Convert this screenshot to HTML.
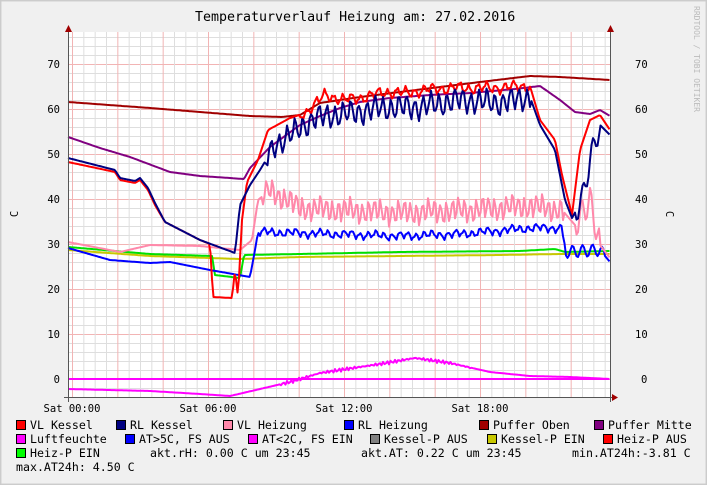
<!DOCTYPE html>
<html><head><meta charset="utf-8"><style>
html,body{margin:0;padding:0;background:#f0f0f0}
svg{display:block}
text{font-family:"DejaVu Sans Mono","Liberation Mono",monospace;fill:#000}
</style></head><body>
<svg id="s" width="707" height="485" viewBox="0 0 707 485" xmlns="http://www.w3.org/2000/svg">
<rect x="0" y="0" width="707" height="485" fill="#f0f0f0"/>
<rect x="0.5" y="0.5" width="706" height="484" fill="none" stroke="#c8c8c8" stroke-width="2"/>
<rect x="1" y="1" width="705" height="483" fill="none" stroke="#cfcfcf"/>
<rect x="68" y="32" width="543" height="365" fill="#ffffff"/>
<g id="grid"></g>
<g id="lines" fill="none" stroke-width="2" stroke-linejoin="round"></g>
<line x1="68.5" y1="28" x2="68.5" y2="402" stroke="#555"/>
<line x1="610.5" y1="28" x2="610.5" y2="402" stroke="#555"/>
<line x1="64" y1="397.5" x2="614" y2="397.5" stroke="#555"/>
<polygon points="65,32 72,32 68.5,25" fill="#a00000"/>
<polygon points="607,32 614,32 610.5,25" fill="#a00000"/>
<polygon points="612,394 612,401 618,397.5" fill="#a00000"/>
<text x="195" y="21" font-size="13.3">Temperaturverlauf Heizung am: 27.02.2016</text>
<g font-size="10.5" text-anchor="end">
<text x="60" y="68">70</text><text x="60" y="113">60</text><text x="60" y="158">50</text><text x="60" y="203">40</text><text x="60" y="248">30</text><text x="60" y="293">20</text><text x="60" y="338">10</text><text x="60" y="383">0</text>
</g>
<g font-size="10.5">
<text x="635" y="68">70</text><text x="635" y="113">60</text><text x="635" y="158">50</text><text x="635" y="203">40</text><text x="635" y="248">30</text><text x="635" y="293">20</text><text x="635" y="338">10</text><text x="641" y="383">0</text>
</g>
<text transform="translate(18,214) rotate(-90)" font-size="10.5" text-anchor="middle">C</text>
<text transform="translate(666,214) rotate(90)" font-size="10.5" text-anchor="middle">C</text>
<text transform="translate(694,6) rotate(90)" font-size="8" fill="#bbb" style="fill:#bbb">RRDTOOL / TOBI OETIKER</text>
<g font-size="10.5" text-anchor="middle">
<text x="72" y="412">Sat 00:00</text><text x="208" y="412">Sat 06:00</text><text x="344" y="412">Sat 12:00</text><text x="480" y="412">Sat 18:00</text>
</g>
<g id="leg" font-size="11.6"></g>
</svg>
<script>
var NS="http://www.w3.org/2000/svg";
function el(p,t,a){var e=document.createElementNS(NS,t);for(var k in a)e.setAttribute(k,a[k]);p.appendChild(e);return e;}
var g=document.getElementById('grid');
for(var v=-4;v<=76;v+=2){var y=379-4.5*v;if(y<32||y>397)continue;
 el(g,'line',{x1:68,x2:611,y1:y+.5,y2:y+.5,stroke:(v%10==0)?'#f2b4b4':'#dedede','stroke-width':1});}
for(var h=-0.5;h<=24;h+=0.5){var x=72+22.667*h;if(x<68||x>611)continue;
 el(g,'line',{y1:32,y2:397,x1:x+.5,x2:x+.5,stroke:(Math.abs(h%2)<0.01)?'#f2b4b4':'#dedede','stroke-width':1});}
var L=document.getElementById('lines');
function interp(pts,x){for(var i=0;i<pts.length-1;i++){if(x>=pts[i][0]&&x<=pts[i+1][0]){var t=(x-pts[i][0])/(pts[i+1][0]-pts[i][0]||1);return pts[i][1]+t*(pts[i+1][1]-pts[i][1]);}}return pts[pts.length-1][1];}
function draw(c,pts,osc,w){var d='';var x0=pts[0][0],x1=pts[pts.length-1][0];
 for(var x=x0;x<=x1;x+=1.5){var y=interp(pts,x);
  if(osc)for(var j=0;j<osc.length;j++){var o=osc[j];if(x>=o[0]&&x<=o[1])y+=o[2]*Math.sin((x-o[0])*2*Math.PI/o[3])+(o[4]||0)*Math.sin(x*1.7)+(o[5]||0)*Math.sin(x*0.23);}
  d+=(d?'L':'M')+x.toFixed(1)+' '+y.toFixed(1);}
 el(L,'path',{d:d,stroke:c,'stroke-width':w||2});}
draw('#c8c800',[[68,250],[150,256],[240,259],[300,257],[400,256],[500,255],[560,254],[610,254]]);
draw('#00e000',[[68,247],[150,254],[212,256],[215,275],[240,278],[244,255],[300,254],[400,252],[520,251],[555,249],[565,252],[610,251]]);
draw('#0000ff',[[68,248],[110,260],[150,263],[170,262],[210,270],[250,277],[255,250],[258,232],[300,233],[400,236],[460,234],[530,228],[562,228],[566,252],[600,250],[610,262]],[[258,565,3,8,1.2,1.5],[565,605,6,10]]);
draw('#ff88aa',[[68,242],[120,252],[150,245],[200,246],[240,250],[252,240],[258,200],[270,190],[300,208],[400,213],[470,210],[530,206],[562,210],[575,225],[590,200],[600,245],[610,258]],[[262,565,10,6,2.5,3],[575,600,14,9]]);
draw('#a00000',[[68,102],[150,108],[250,116],[282,117],[300,115],[320,103],[360,97],[400,92],[440,87],[480,82],[530,76],[560,77],[610,80]]);
draw('#800080',[[68,137],[100,148],[130,157],[170,172],[200,176],[244,179],[250,168],[270,147],[300,125],[320,116],[340,108],[360,102],[390,98],[430,95],[470,93],[515,89],[540,86],[560,100],[575,112],[590,114],[600,110],[610,116]]);
draw('#ff0000',[[68,162],[115,172],[120,180],[135,183],[140,180],[148,190],[155,205],[165,222],[200,240],[210,244],[213,297],[232,298],[235,270],[238,297],[242,220],[247,182],[258,160],[268,130],[290,118],[305,113],[325,95],[345,100],[365,97],[385,92],[405,93],[425,90],[450,88],[490,88],[530,86],[540,120],[555,140],[562,175],[572,215],[580,150],[590,120],[600,115],[610,130]],[[300,530,4,9,1.5,2]]);
draw('#000080',[[68,158],[115,170],[120,178],[135,181],[140,178],[148,188],[155,203],[165,222],[200,240],[235,253],[240,205],[250,185],[260,170],[275,145],[295,132],[315,118],[335,115],[360,112],[380,108],[420,107],[460,100],[500,103],[530,97],[540,125],[555,150],[565,200],[572,218],[582,200],[590,160],[600,125],[610,135]],[[265,530,10,8,2,3],[575,600,12,10]]);
draw('#ff00ff',[[68,379],[610,379]]);
draw('#ff00ff',[[68,389],[150,391],[200,394],[230,396],[260,389],[290,382],[320,373],[380,364],[415,358],[450,363],[490,372],[530,376],[570,377],[610,379]],[[280,470,1,4,0.8]]);
var lg=document.getElementById('leg');
function item(bx,y,c,t){el(lg,'rect',{x:bx+.5,y:y-8.5,width:9,height:9,fill:c,stroke:'#000','stroke-width':1});var e=el(lg,'text',{x:bx+14,y:y});e.textContent=t;}
function txt(x,y,t){var e=el(lg,'text',{x:x,y:y});e.textContent=t;}
var r1=429,r2=443,r3=457,r4=471;
item(16,r1,'#ff0000','VL Kessel');item(116,r1,'#000080','RL Kessel');item(223,r1,'#ff88aa','VL Heizung');item(344,r1,'#0000ff','RL Heizung');item(479,r1,'#a00000','Puffer Oben');item(594,r1,'#800080','Puffer Mitte');
item(16,r2,'#ff00ff','Luftfeuchte');item(125,r2,'#0000ff','AT>5C, FS AUS');item(248,r2,'#ff00ff','AT<2C, FS EIN');item(370,r2,'#808080','Kessel-P AUS');item(487,r2,'#c8c800','Kessel-P EIN');item(603,r2,'#ff0000','Heiz-P AUS');
item(16,r3,'#00ff00','Heiz-P EIN');txt(150,r3,'akt.rH: 0.00 C um 23:45');txt(361,r3,'akt.AT: 0.22 C um 23:45');txt(572,r3,'min.AT24h:-3.81 C');
txt(16,r4,'max.AT24h: 4.50 C');
</script>
</body></html>
